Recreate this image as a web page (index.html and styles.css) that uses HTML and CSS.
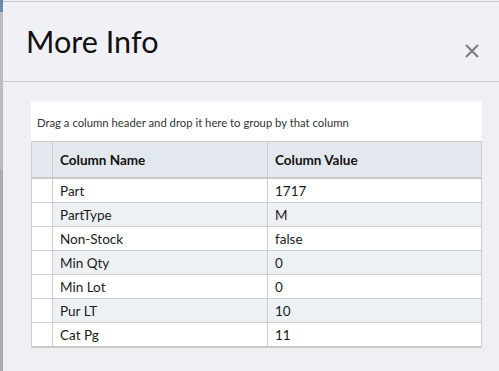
FILE: index.html
```html
<!DOCTYPE html>
<html>
<head>
<meta charset="utf-8">
<link rel="stylesheet" href="styles.css">
</head>
<body>
<div class="page">
  <div class="backdrop-strip"></div>
  <div class="modal">
    <div class="modal-header">
      <h1 class="modal-title">More Info</h1>
      <button class="close-btn" aria-label="Close">
        <svg width="16" height="16" viewBox="0 0 16 16"><path d="M2 2 L14 14 M14 2 L2 14" stroke="#7a7d82" stroke-width="2" fill="none"/></svg>
      </button>
    </div>
    <div class="modal-body">
      <div class="grid">
        <div class="group-panel">Drag a column header and drop it here to group by that column</div>
        <table class="grid-table">
          <thead>
            <tr>
              <th class="sel"></th>
              <th class="name">Column Name</th>
              <th class="value last">Column Value</th>
            </tr>
          </thead>
          <tbody>
            <tr><td class="sel"></td><td>Part</td><td>1717</td></tr>
            <tr class="alt"><td class="sel"></td><td>PartType</td><td>M</td></tr>
            <tr><td class="sel"></td><td>Non-Stock</td><td>false</td></tr>
            <tr class="alt"><td class="sel"></td><td>Min Qty</td><td>0</td></tr>
            <tr><td class="sel"></td><td>Min Lot</td><td>0</td></tr>
            <tr class="alt"><td class="sel"></td><td>Pur LT</td><td>10</td></tr>
            <tr><td class="sel"></td><td>Cat Pg</td><td>11</td></tr>
          </tbody>
        </table>
      </div>
    </div>
  </div>
</div>
</body>
</html>
```
FILE: styles.css
```css
html, body {
  margin: 0;
  padding: 0;
  height: 100%;
  background: #eef0f4;
  font-family: Lato, "Noto Sans", sans-serif;
  color: #1a1a1a;
}
.page {
  display: flex;
  height: 371px;
  overflow: hidden;
}
.backdrop-strip {
  width: 3px;
  flex: none;
  background: linear-gradient(to bottom, #6f8aa6 0, #6f8aa6 12px, #b9bcc1 12px, #b9bcc1 170px, #a9adb2 170px);
}
.modal {
  flex: 1;
  margin-top: 1px;
  border-top: 1px solid #c4c5cd;
  background: #eef0f4;
  display: flex;
  flex-direction: column;
}
.modal-header {
  height: 79px;
  background: #f0f1f6;
  border-bottom: 1px solid #c9cad1;
  display: flex;
  align-items: flex-start;
  justify-content: space-between;
  padding: 0 19px 0 23px;
}
.modal-title {
  margin: 0;
  padding-top: 20px;
  font-size: 30.6px;
  font-weight: 400;
  line-height: 40px;
  color: #111;
}
.close-btn {
  margin-top: 41px;
  padding: 0;
  border: 0;
  background: transparent;
  width: 16px;
  height: 16px;
  display: flex;
}
.modal-body {
  padding: 19px 17px 0 28px;
}
.grid {
  background: #fff;
}
.group-panel {
  height: 40px;
  box-sizing: border-box;
  padding: 15px 0 0 6px;
  font-size: 11.3px;
  line-height: 13px;
  color: #333;
}
.grid-table {
  width: 100%;
  border-collapse: collapse;
  font-size: 13.5px;
  border-left: 1px solid #cdcdcd;
  border-right: 1px solid #cdcdcd;
  border-bottom: 2px solid #cbcbcb;
}
.grid-table th {
  background: #e3e7ee;
  font-weight: 700;
  text-align: left;
  height: 35px;
  padding: 0 7px;
  border-top: 1px solid #cdcdcd;
  border-bottom: 2px solid #cbcbcb;
  border-left: 1px solid #cdcdcd;
  color: #111;
}
.grid-table th.sel {
  border-left: 0;
}
.grid-table th.last {
  border-right: 1px dashed #c3c3c3;
}
.grid-table td {
  height: 23px;
  padding: 0 7px;
  border-bottom: 1px solid #cdcdcd;
  border-left: 1px solid #cdcdcd;
  color: #1a1a1a;
}
.grid-table td.sel {
  border-left: 0;
}
.grid-table .sel {
  width: 6px;
}
.grid-table .name {
  width: 200px;
}
.grid-table tr.alt td {
  background: #edf1f5;
}
.grid-table tr.alt td.sel {
  background: #fff;
}
```
